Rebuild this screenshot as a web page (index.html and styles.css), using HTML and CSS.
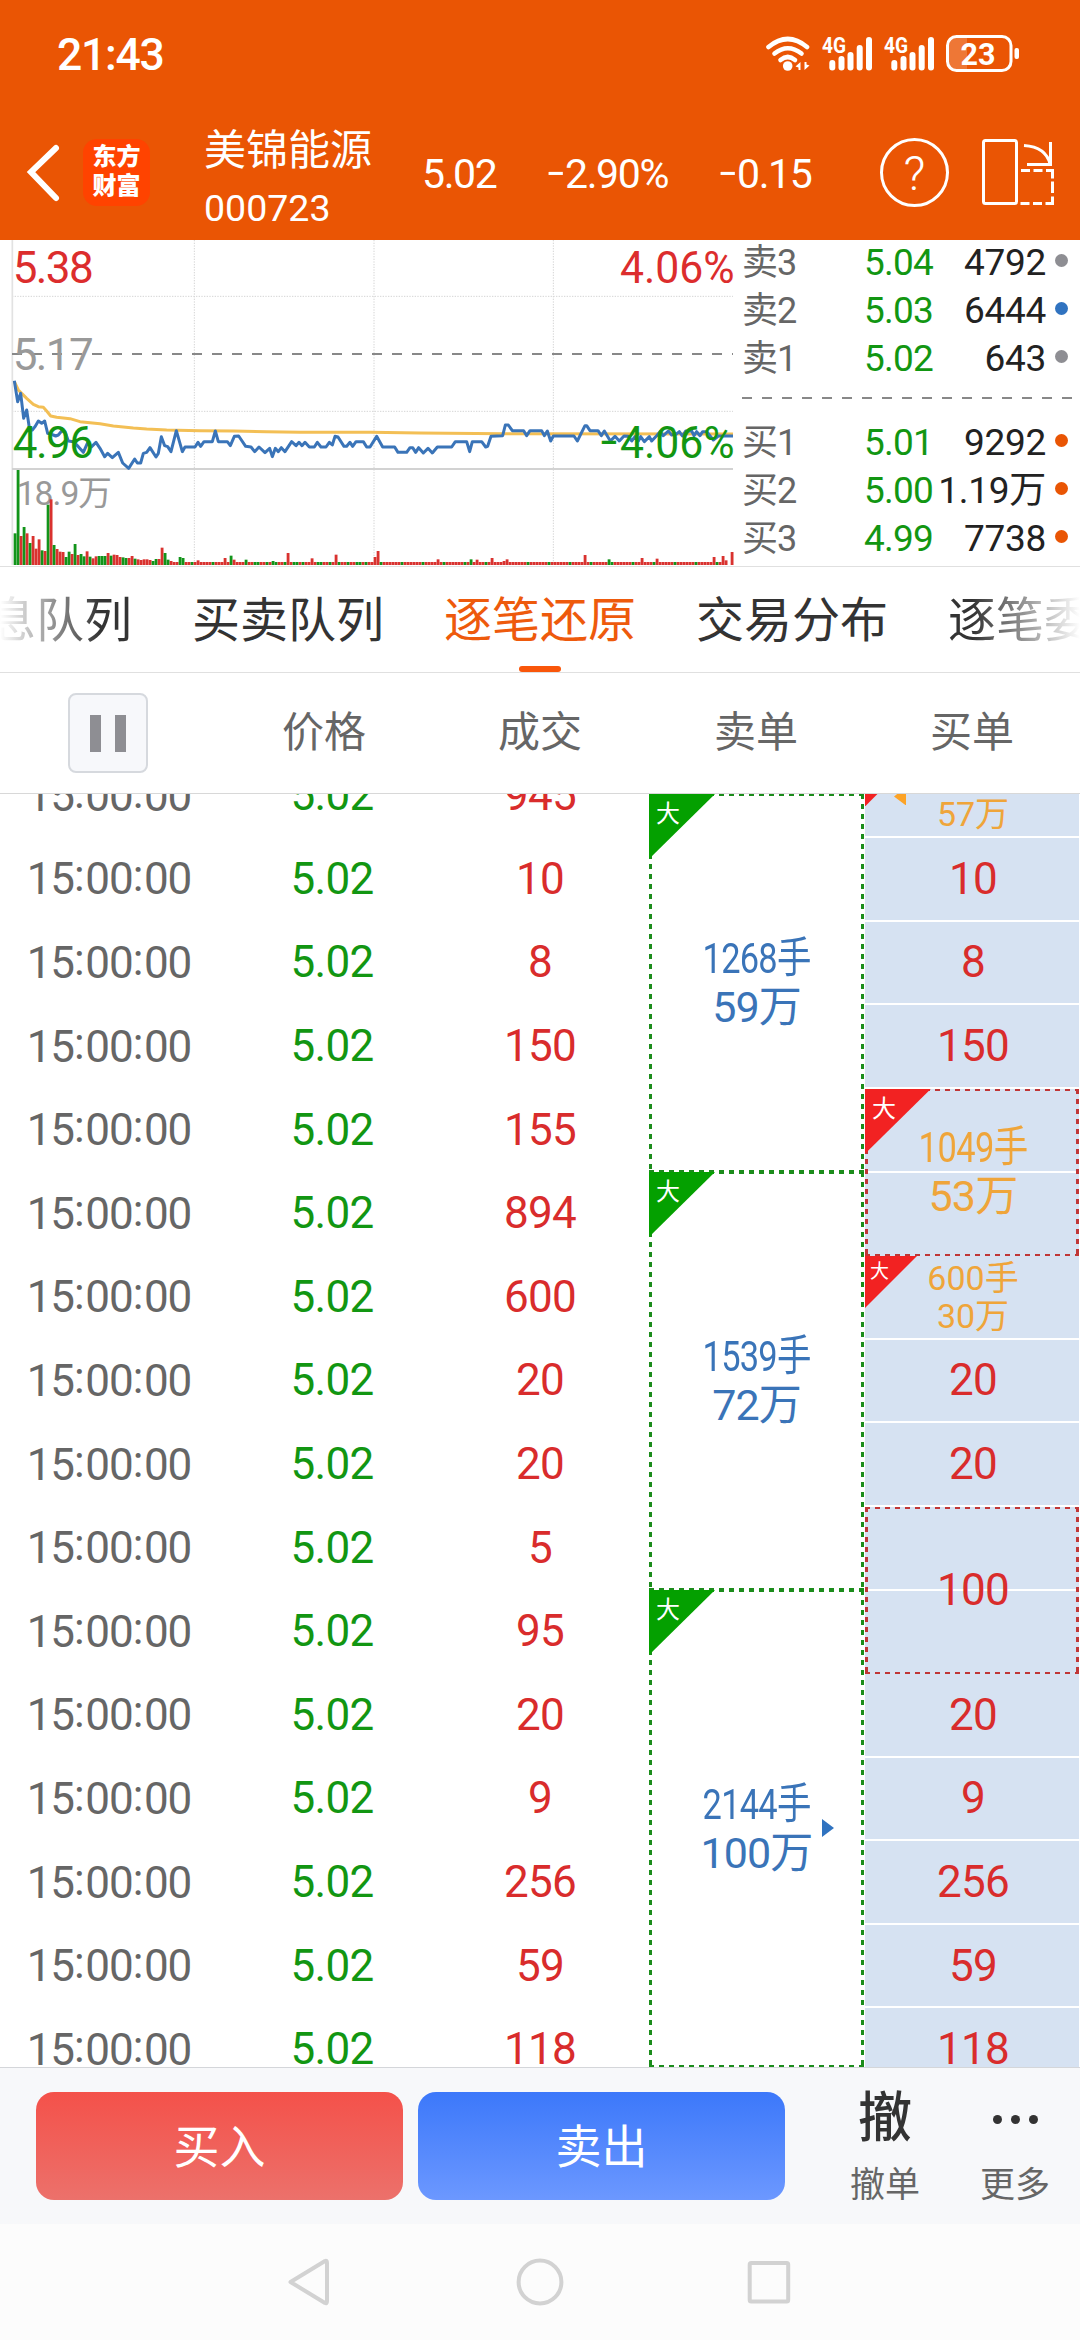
FILE: index.html
```html
<!doctype html>
<html lang="zh-CN">
  <head>
    <meta charset="UTF-8" />
    <meta name="viewport" content="width=device-width, initial-scale=1.0" />
    <title>美锦能源 000723</title>
    <link rel="stylesheet" href="styles.css">
  </head>
  <body>
    <header class="header">
      <div class="status-bar">
        <span class="clock">21:43</span>
        <svg class="status-icons" width="260" height="44" viewBox="762 32 260 44">
          <g fill="none" stroke="#fff" stroke-width="4.6" stroke-linecap="round">
            <path d="M767.5 47 Q786.800 31 806 47" />
            <path d="M773.500 53.500 Q786.800 43 800.500 53.500" />
            <path d="M779.500 60 Q786.800 54 794 60" />
          </g>
          <circle cx="786.700" cy="66" r="4.800" fill="#fff" />
          <path d="M794.500 66.500 L799.500 62 V70 H797.500 V67.500 Z M808.500 65.500 L803.500 70 V62 H805.500 V64.500 Z" fill="#fff" />
          <g id="signal" fill="#fff">
            <text class="net" x="821" y="53" textLength="24" lengthAdjust="spacingAndGlyphs">4G</text>
            <rect x="828.300" y="60" width="6" height="10.500" rx="3" />
            <rect x="837.500" y="56" width="6" height="14.500" rx="3" />
            <rect x="846.500" y="52" width="6" height="18.500" rx="3" />
            <rect x="855.700" y="45" width="6" height="25.500" rx="3" />
            <rect x="865" y="37" width="6" height="33.500" rx="3" />
          </g>
          <use href="#signal" x="62" />
          <path d="M966 37 H956 Q947 37 947 46 V61 Q947 70 956 70 H966 Z" fill="#fff" opacity=".2" />
          <rect x="946.500" y="36.500" width="63.500" height="34" rx="9" fill="none" stroke="#fff" stroke-width="3" />
          <rect x="1013.500" y="48" width="4.500" height="11" rx="2" fill="#fff" />
          <text class="battery" x="959.500" y="64.800" textLength="35" lengthAdjust="spacingAndGlyphs">23</text>
        </svg>
      </div>
      <div class="title-bar">
        <svg class="back" width="83" height="68" viewBox="0 0 83 68">
          <path d="M56 10 L31 34 L56 60" fill="none" stroke="#fff" stroke-width="6" stroke-linecap="round" />
        </svg>
        <div class="logo">东方<br>财富</div>
        <div class="stock">
          <div class="stock-name">美锦能源</div>
          <div class="stock-code">000723</div>
        </div>
        <span class="quote">5.02</span>
        <span class="quote quote-pct"><span class="minus">−</span>2.90%</span>
        <span class="quote quote-chg"><span class="minus">−</span>0.15</span>
        <div class="help">?</div>
        <svg class="rotate" width="76" height="70" viewBox="980 137 76 70" fill="none" stroke="#fff" stroke-width="3">
          <rect x="983.500" y="140.500" width="33" height="63" rx="2" />
          <path d="M1024 145.500 Q1046 147 1050 164" />
          <path d="M1027 164.500 H1050.500 V142" />
          <path d="M1021 170.500 h9 m3.500 0 h9 m3.500 0 h6.500 v8 m0 3 v11.500 m0 3.500 v7 h-7 m-3.500 0 h-9 m-3.500 0 h-9" />
        </svg>
      </div>
    </header>

    <section class="market">
      <svg class="chart" width="740" height="326" viewBox="0 15 2220 978">
        <g class="grid">
          <path d="M36 184 H2199 M36 529 H2199 M583 15 V990 M1122 15 V990 M1660 15 V990" />
        </g>
        <path d="M37 15 V990" stroke="#e2e2e2" stroke-width="5" />
        <path d="M36 702 H2199" stroke="#d2d2d2" stroke-width="6" />
        <path d="M36 357 H2199" stroke="#888" stroke-width="6" stroke-dasharray="30 30" />
        <text class="grey big" x="38" y="405" textLength="243">5.17</text>
        <text class="grey small" x="50" y="810" textLength="286">18.9万</text>
        <g id="bars"></g>
        <polyline class="avg" points="43,440 55,465 65,475 80,490 100,508 115,515 130,517 140,528 152,543 170,547 210,551 240,560 300,566 340,573 400,579 440,582 500,585 600,587 700,588 800,590 900,592 1110,592 1260,594 1510,596 2199,597" />
        <polyline class="price" points="43,437 53,500 62,475 71,550 80,525 89,585 97,585 105,575 115,558 125,565 134,558 143,595 160,600 167,603 175,600 185,588 195,590 205,618 220,620 235,635 250,652 262,625 275,635 288,622 300,640 314,665 323,655 337,668 355,652 368,684 386,700 404,672 412,684 422,684 430,655 440,652 450,638 468,666 475,655 484,605 494,632 503,635 513,650 529,587 547,650 555,636 585,636 594,622 602,634 612,620 637,620 646,588 655,620 682,620 691,632 703,604 716,603 737,634 753,636 764,650 777,636 795,653 809,640 817,665 826,640 835,650 844,638 855,650 875,620 888,632 897,622 906,632 915,622 928,636 943,636 952,622 963,636 978,636 988,622 997,630 1005,604 1014,606 1032,634 1040,634 1050,622 1058,634 1068,620 1090,620 1100,636 1110,636 1130,604 1148,636 1184,636 1194,652 1220,652 1230,638 1238,638 1247,652 1256,638 1270,654 1284,640 1297,654 1312,636 1355,636 1366,620 1400,620 1409,650 1417,620 1445,620 1457,636 1463,634 1473,604 1508,602 1516,570 1525,570 1537,587 1571,587 1580,602 1590,587 1625,587 1633,602 1642,588 1652,618 1660,603 1722,603 1732,618 1755,572 1760,572 1770,587 1794,587 1804,602 1813,588 1831,618 1845,604 1858,618 1872,603 1885,604 1895,618 1905,605 1915,618 1922,605 1933,620 1948,605 1955,618 1970,602 1980,590 1990,602 2005,588 2015,600 2028,598 2038,590 2047,603 2057,588 2075,588 2082,602 2090,590 2100,602 2108,590 2120,590 2140,615 2155,603 2199,603" />
        <text class="up big" x="38" y="144" textLength="243">5.38</text>
        <text class="up big" x="1860" y="144" textLength="344" lengthAdjust="spacingAndGlyphs">4.06%</text>
        <text class="down big" x="38" y="669" textLength="244">4.96</text>
        <text class="down big" x="1860" y="669" textLength="344" lengthAdjust="spacingAndGlyphs">4.06%</text>
        <text class="down big" x="1796" y="669" textLength="60" lengthAdjust="spacingAndGlyphs">−</text>
      </svg>
      <div class="book">
        <div class="level"><span class="side">卖3</span><span class="level-price">5.04</span><span class="level-vol">4792</span><i class="dot"></i></div>
        <div class="level"><span class="side">卖2</span><span class="level-price">5.03</span><span class="level-vol">6444</span><i class="dot dot-blue"></i></div>
        <div class="level"><span class="side">卖1</span><span class="level-price">5.02</span><span class="level-vol">643</span><i class="dot"></i></div>
        <div class="book-split"></div>
        <div class="level"><span class="side">买1</span><span class="level-price">5.01</span><span class="level-vol">9292</span><i class="dot dot-orange"></i></div>
        <div class="level"><span class="side">买2</span><span class="level-price">5.00</span><span class="level-vol">1.19万</span><i class="dot dot-orange"></i></div>
        <div class="level"><span class="side">买3</span><span class="level-price">4.99</span><span class="level-vol">7738</span><i class="dot dot-orange"></i></div>
      </div>
    </section>

    <nav class="tabs">
      <span class="tab">息队列</span>
      <span class="tab">买卖队列</span>
      <span class="tab active">逐笔还原</span>
      <span class="tab">交易分布</span>
      <span class="tab">逐笔委托</span>
    </nav>

    <div class="list-head">
      <div class="col"><button class="pause"><i></i><i></i></button></div>
      <div class="col">价格</div>
      <div class="col">成交</div>
      <div class="col">卖单</div>
      <div class="col">买单</div>
    </div>

    <main class="list">
      <div class="trades" id="trades"></div>
      <div class="sells">
        <div class="order sell-1"><b class="flag">大</b><span class="lots">1268手</span><span>59万</span></div>
        <div class="order sell-2"><b class="flag">大</b><span class="lots">1539手</span><span>72万</span></div>
        <div class="order sell-3"><b class="flag">大</b><span class="lots">2144手</span><span>100万</span><i class="arrow"></i></div>
      </div>
      <div class="buys">
        <div class="buy big-one"><b class="flag small-flag">大</b><span>&nbsp;</span><span>57万</span><i class="arrow arrow-left"></i></div>
        <div class="buy">10</div>
        <div class="buy">8</div>
        <div class="buy">150</div>
        <div class="buy merged"><b class="flag">大</b><span class="lots">1049手</span><span>53万</span></div>
        <div class="buy big-one"><b class="flag small-flag">大</b><span>600手</span><span>30万</span></div>
        <div class="buy">20</div>
        <div class="buy">20</div>
        <div class="buy merged merged-plain"><span>100</span></div>
        <div class="buy">20</div>
        <div class="buy">9</div>
        <div class="buy">256</div>
        <div class="buy">59</div>
        <div class="buy">118</div>
      </div>
    </main>

    <footer class="actions">
      <button class="btn btn-buy">买入</button>
      <button class="btn btn-sell">卖出</button>
      <div class="action">
        <span class="action-icon">撤</span>
        <span class="action-label">撤单</span>
      </div>
      <div class="action action-more">
        <span class="action-icon"><i></i><i></i><i></i></span>
        <span class="action-label">更多</span>
      </div>
    </footer>

    <div class="sys-nav">
      <svg width="1080" height="116" viewBox="0 2224 1080 116" fill="none" stroke="#d2d2d2" stroke-width="4" stroke-linejoin="round">
        <path d="M290.500 2282 L325 2261 Q327 2260 327 2263 V2301 Q327 2304 325 2303 Z" />
        <circle cx="540" cy="2282" r="21.400" />
        <rect x="749.700" y="2263" width="38.500" height="38.500" rx="1.500" />
      </svg>
    </div>

    <script>
      const volumes = [945, 10, 8, 150, 155, 894, 600, 20, 20, 5, 95, 20, 9, 256, 59, 118];

      document.getElementById("trades").innerHTML = volumes
        .map(
          (v) => `<div class="trade">
            <span class="time">15<i>:</i>00<i>:</i>00</span>
            <span class="deal-price">5.02</span>
            <span class="deal-vol">${v}</span>
          </div>`
        )
        .join("");

      // volume bars: the opening minutes, then the spikes by minute index
      const open = "95g 285g 87r 114g 95r 66g 87r 49r 77r 44g 42r 181g 197r 60g 48r 40r 39r 24g 40g 33r 63g 30r 33g 26g 41r 25g 20r 26r 27g 27g 27g 36r 28g 31r 30r 24r 23g 21g 21r 27r 19g 17r 15r 17r 17r 15r 12g 18g 18r 52r 36g 16g 12r".split(" ");
      const spikes = {
        55: "24g", 56: "21g", 61: "14r", 70: "21r", 72: "28g", 73: "16r", 77: "16g", 86: "12g",
        91: "36r", 99: "20r", 107: "31r", 120: "24r", 121: "42r", 141: "17r", 152: "17g",
        154: "16r", 159: "21r", 163: "12r", 164: "17r", 190: "30r", 198: "17g", 209: "21r",
        214: "19r", 233: "24r", 236: "27r", 237: "14r", 239: "39r",
      };
      let bars = "";
      for (let i = 0; i < 240; i++) {
        if (i === 238) continue;
        const quiet = i % 7 === 3 || (i > 80 && i < 120 && i % 3 === 0) ? "9g" : "9r";
        const bar = open[i] || spikes[i] || quiet;
        const height = parseInt(bar);
        const color = bar.endsWith("g") ? "#12941a" : "#d9322f";
        bars += `<rect x="${41 + i * 9}" y="${990 - height}" width="8.500" height="${height}" fill="${color}" />`;
      }
      document.getElementById("bars").innerHTML = bars;
    </script>
  </body>
</html>
```
FILE: styles.css
```css
* {
  box-sizing: border-box;
}

body {
  margin: 0;
  width: 1080px;
  height: 2340px;
  overflow: hidden;
  display: flex;
  flex-direction: column;
  background: #fff;
  color: #333;
  font-family: Roboto, "Noto Sans CJK SC", sans-serif;
}

i {
  font-style: normal;
}

button {
  font-family: inherit;
  border: 0;
  padding: 0;
}

svg {
  display: block;
  flex: none;
}

/* header */
.header {
  height: 240px;
  background: #ea5504;
  color: #fff;
  flex: none;
}

.status-bar {
  height: 104px;
  padding: 4px 57px 0 57px;
  display: flex;
  align-items: center;
  justify-content: space-between;
}

.clock {
  font-size: 44.5px;
  font-weight: 500;
  letter-spacing: -1.3px;
  padding-top: 2px;
}

.net {
  font-size: 22px;
  font-weight: 700;
}

.battery {
  font-size: 32px;
  font-weight: 700;
  fill: #fff;
}

.title-bar {
  height: 136px;
  display: flex;
  align-items: center;
}

.logo {
  width: 67px;
  height: 67px;
  padding-top: 4px;
  border-radius: 14px;
  background: #ff4300;
  font-size: 24px;
  font-weight: 900;
  line-height: 29px;
  text-align: center;
}

.stock {
  margin: 14px 0 0 54px;
  width: 218px;
  line-height: 59px;
}

.stock-name {
  font-size: 42px;
  height: 58px;
}

.stock-code {
  font-size: 37.5px;
  height: 59px;
}

.quote {
  width: 125px;
  font-size: 41px;
  letter-spacing: -1.4px;
  white-space: nowrap;
  padding-top: 4px;
}

.quote-pct {
  width: 172px;
}

.quote-chg {
  width: 161px;
}

.minus {
  display: inline-block;
  transform: scaleX(0.85);
  margin: 0 -1px 0 -3px;
}

.help {
  width: 69px;
  height: 69px;
  border: 3px solid #fff;
  border-radius: 50%;
  font-size: 48px;
  font-weight: 300;
  line-height: 65px;
  text-align: center;
}

.rotate {
  margin-left: 31px;
}

/* minute chart and order book */
.market {
  height: 327px;
  border-bottom: 1px solid #e0e0e0;
  display: flex;
  flex: none;
}

.grid path {
  fill: none;
  stroke: #d4d4d4;
  stroke-width: 3;
  stroke-dasharray: 4 4;
}

.avg,
.price {
  fill: none;
  stroke-width: 9;
  stroke-linejoin: round;
}

.avg {
  stroke: #f3bf55;
}

.price {
  stroke: #3a74b8;
}

.big {
  font-size: 132px;
}

.small {
  font-size: 101px;
}

.grey {
  fill: #999;
}

.up {
  fill: #dc2d2d;
}

.down {
  fill: #129612;
}

.book {
  flex: 1;
  padding-left: 2px;
}

.level {
  height: 48px;
  padding-right: 12px;
  display: flex;
  align-items: center;
  font-size: 37px;
  line-height: 44px;
}

.level span {
  padding-bottom: 2px;
}

.side {
  width: 122px;
  font-size: 36px;
  letter-spacing: -1px;
  color: #666;
}

.level-price {
  width: 70px;
  letter-spacing: -0.8px;
  color: #129612;
}

.level-vol {
  flex: 1;
  margin-left: -20px;
  color: #222;
  text-align: right;
  letter-spacing: -0.3px;
}

.dot {
  width: 13px;
  height: 13px;
  margin-left: 9px;
  margin-bottom: 7px;
  border-radius: 50%;
  background: #8e8e93;
}

.dot-blue {
  background: #3073c0;
}

.dot-orange {
  background: #e95504;
}

.book-split {
  height: 2px;
  margin: 13px 8px 21px 0;
  background: repeating-linear-gradient(90deg, #888 0 10px, transparent 10px 20px);
}

/* tabs */
.tabs {
  height: 106px;
  border-bottom: 1px solid #e0e0e0;
  display: flex;
  flex: none;
  gap: 60px;
  padding-left: 132px;
  overflow: hidden;
}

.tab {
  flex: none;
  width: 192px;
  height: 105px;
  font-size: 48px;
  line-height: 107px;
  white-space: nowrap;
}

.tab:first-child {
  width: 144px;
  margin-left: -144px;
  background: linear-gradient(90deg, #fff 12px, #333 112px);
  background-clip: text;
  color: transparent;
}

.tab:last-child {
  background: linear-gradient(90deg, #333 24px, #fff 132px);
  background-clip: text;
  color: transparent;
}

.active {
  color: #ee5a0c;
  display: flex;
  flex-direction: column;
  align-items: center;
}

.active::after {
  content: "";
  flex: none;
  width: 42px;
  height: 6px;
  margin-top: -8px;
  border-radius: 3px;
  background: #f9560a;
}

/* list header */
.list-head {
  height: 121px;
  border-bottom: 1px solid #d8d8d8;
  display: flex;
  flex: none;
  align-items: center;
}

.col {
  width: 216px;
  display: flex;
  justify-content: center;
  font-size: 42px;
  line-height: 60px;
  color: #666;
}

.pause {
  width: 80px;
  height: 80px;
  border: 2px solid #d6d9de;
  border-radius: 8px;
  background: #f7f8fb;
  display: flex;
  align-items: center;
  justify-content: center;
  gap: 14px;
}

.pause i {
  width: 11px;
  height: 37px;
  background: #8e8e93;
}

/* trades, sell orders, buy orders */
.list {
  height: 1273px;
  display: flex;
  flex: none;
  overflow: hidden;
}

.trades {
  width: 648px;
  margin-top: -40px;
}

.trade {
  height: 83.6px;
  display: flex;
  align-items: center;
  font-size: 44px;
  line-height: 78px;
  padding-bottom: 1px;
}

.trade span {
  width: 216px;
  text-align: center;
  letter-spacing: -0.7px;
}

.trade .time {
  padding: 0 0 2px 2px;
  letter-spacing: -1px;
  color: #666;
}

.time i {
  vertical-align: 3px;
  letter-spacing: 0.5px;
}

.trade .deal-price {
  color: #129612;
  padding-left: 16px;
}

.trade .deal-vol {
  color: #d92c2c;
}

.sells {
  width: 216px;
  padding-left: 1px;
}

.order,
.merged {
  --line: #1b8c1b;
  background-image:
    repeating-linear-gradient(90deg, var(--line) 0 5px, transparent 5px 10px),
    repeating-linear-gradient(90deg, var(--line) 0 5px, transparent 5px 10px),
    repeating-linear-gradient(var(--line) 0 5px, transparent 5px 10px),
    repeating-linear-gradient(var(--line) 0 5px, transparent 5px 10px);
  background-size: 100% 2px, 100% 2px, 3px 100%, 3px 100%;
  background-position: top, bottom, left, right;
  background-repeat: no-repeat;
}

.order {
  position: relative;
  display: flex;
  flex-direction: column;
  align-items: center;
  justify-content: center;
  font-size: 43px;
  line-height: 49px;
  letter-spacing: -0.9px;
  color: #3a74b8;
}

.order span,
.buy span {
  height: 49px;
}

.sell-1 {
  height: 378px;
}

.sell-2 {
  height: 418px;
}

.sell-3 {
  height: 477px;
}

.lots {
  transform: scaleX(0.8);
}

.flag {
  position: absolute;
  left: 0;
  top: 0;
  width: 66px;
  height: 65px;
  padding: 7px 0 0 7px;
  background: #04a000;
  clip-path: polygon(0 0, 100% 0, 0 100%);
  color: #fff;
  font-size: 24px;
  font-weight: 400;
  line-height: 26px;
}

.arrow {
  position: absolute;
  left: 173px;
  top: 229px;
  width: 12px;
  height: 18px;
  background: #3073c0;
  clip-path: polygon(0 0, 100% 50%, 0 100%);
}

.buys {
  width: 216px;
  margin-top: -39.6px;
  padding: 0 1px 0 1px;
}

.buy {
  position: relative;
  height: 83.6px;
  padding-left: 2px;
  border-bottom: 2px solid #fff;
  background-color: #d6e2f2;
  display: flex;
  flex-direction: column;
  align-items: center;
  justify-content: center;
  font-size: 44px;
  letter-spacing: -0.7px;
  color: #d92c2c;
}

.buy .flag {
  background: #f22222;
}

.buy .small-flag {
  width: 52px;
  height: 52px;
  padding: 5px 0 0 5px;
  font-size: 19px;
  line-height: 22px;
}

.big-one {
  font-size: 34px;
  line-height: 38px;
  letter-spacing: 0;
  color: #efa53a;
}

.big-one span {
  height: 38px;
}

.arrow-left {
  left: 29px;
  top: 33px;
  background: #fca327;
  clip-path: polygon(100% 0, 0 50%, 100% 100%);
}

.merged {
  --line: #c03636;
  height: 167.2px;
  border: 0;
  font-size: 43px;
  line-height: 49px;
  color: #efa53a;
}

/* white row divider behind the merged cell's text */
.merged::before {
  content: "";
  position: absolute;
  left: 3px;
  right: 3px;
  top: 82px;
  height: 2px;
  background: #fff;
}

.merged span {
  z-index: 1;
}

.merged-plain {
  font-size: 44px;
  color: #d92c2c;
}

/* bottom actions */
.actions {
  height: 157px;
  padding: 24px 0 0 36px;
  border-top: 1px solid #d4d6da;
  background: #f7f8fa;
  display: flex;
  flex: none;
}

.btn {
  width: 367px;
  height: 108px;
  padding-bottom: 7px;
  margin-right: 15px;
  border-radius: 18px;
  color: #fff;
  font-size: 46px;
}

.btn-buy {
  background: linear-gradient(#f4514a, #ec716b);
}

.btn-sell {
  background: linear-gradient(#3c78fa, #6c98ff);
}

.action {
  width: 130px;
  margin-left: 20px;
  display: flex;
  flex-direction: column;
  align-items: center;
}

.action-more {
  margin-left: 0;
}

.action-icon {
  height: 54px;
  display: flex;
  align-items: center;
  gap: 9px;
  font-size: 54px;
  font-weight: 500;
  line-height: 54px;
}

.action-icon i {
  width: 9px;
  height: 9px;
  border-radius: 50%;
  background: #333;
}

.action-label {
  height: 54px;
  margin-top: 13px;
  font-size: 35px;
  line-height: 54px;
  color: #666;
}

.sys-nav {
  height: 116px;
  background: #fcfcfc;
  flex: none;
}
```
